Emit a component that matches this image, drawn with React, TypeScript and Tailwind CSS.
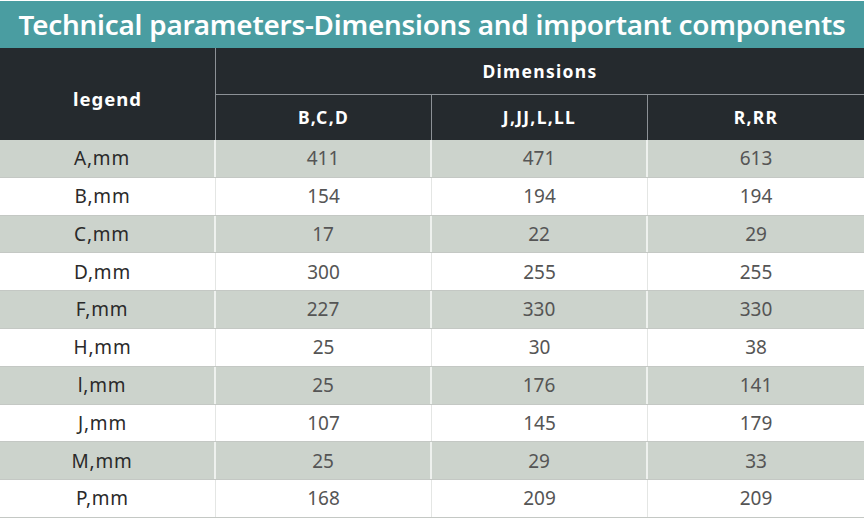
const rows: [string, string, string, string][] = [
  ["A,mm", "411", "471", "613"],
  ["B,mm", "154", "194", "194"],
  ["C,mm", "17", "22", "29"],
  ["D,mm", "300", "255", "255"],
  ["F,mm", "227", "330", "330"],
  ["H,mm", "25", "30", "38"],
  ["l,mm", "25", "176", "141"],
  ["J,mm", "107", "145", "179"],
  ["M,mm", "25", "29", "33"],
  ["P,mm", "168", "209", "209"],
];

export default function App() {
  return (
    <div
      className="w-[868px] h-[522px] bg-white overflow-hidden"
      style={{ fontFamily: '"Noto Sans", "Open Sans", sans-serif' }}
    >
      <div className="w-[864px] pt-px">
        <div className="h-[47px] bg-[#4a9da1] flex items-center justify-center">
          <h1 className="text-white text-[27.8px] font-semibold leading-none tracking-[-0.2px]">
            Technical parameters-Dimensions and important components
          </h1>
        </div>

        <div className="grid grid-cols-[216px_216px_216px_216px] bg-[#252a2e] text-white font-bold">
          <div className="row-span-2 flex items-center justify-center pt-[10px] text-[18.5px] tracking-[1px] border-r border-[#8c9196]">
            legend
          </div>
          <div className="col-span-3 h-[47px] flex items-center justify-center text-[17.5px] tracking-[1.3px] border-b border-[#8c9196]">
            Dimensions
          </div>
          <div className="h-[45px] flex items-center justify-center text-[17.5px] tracking-[1.3px] border-r border-[#8c9196]">
            B,C,D
          </div>
          <div className="h-[45px] flex items-center justify-center text-[17.5px] tracking-[1.3px] border-r border-[#8c9196]">
            J,JJ,L,LL
          </div>
          <div className="h-[45px] flex items-center justify-center text-[17.5px] tracking-[1.3px]">
            R,RR
          </div>
        </div>

        <div>
          {rows.map((r, i) => {
            const grey = i % 2 === 0;
            return (
              <div
                key={r[0]}
                className={`grid grid-cols-[216px_216px_216px_216px] h-[37.8px] border-b border-[#c4c8c4] text-[19px] ${
                  grey ? "bg-[#ccd3cc]" : "bg-white"
                }`}
              >
                {r.map((cell, j) => (
                  <div
                    key={j}
                    className={`flex items-center justify-center ${
                      j === 0 ? "text-[#2a2a2a] tracking-[0.8px] pr-[10px]" : "text-[#555]"
                    } ${j < 3 ? (grey ? "border-r-2 border-[#eef1ee]" : "border-r border-[#e4e6e4]") : ""}`}
                  >
                    {cell}
                  </div>
                ))}
              </div>
            );
          })}
        </div>
      </div>
    </div>
  );
}
